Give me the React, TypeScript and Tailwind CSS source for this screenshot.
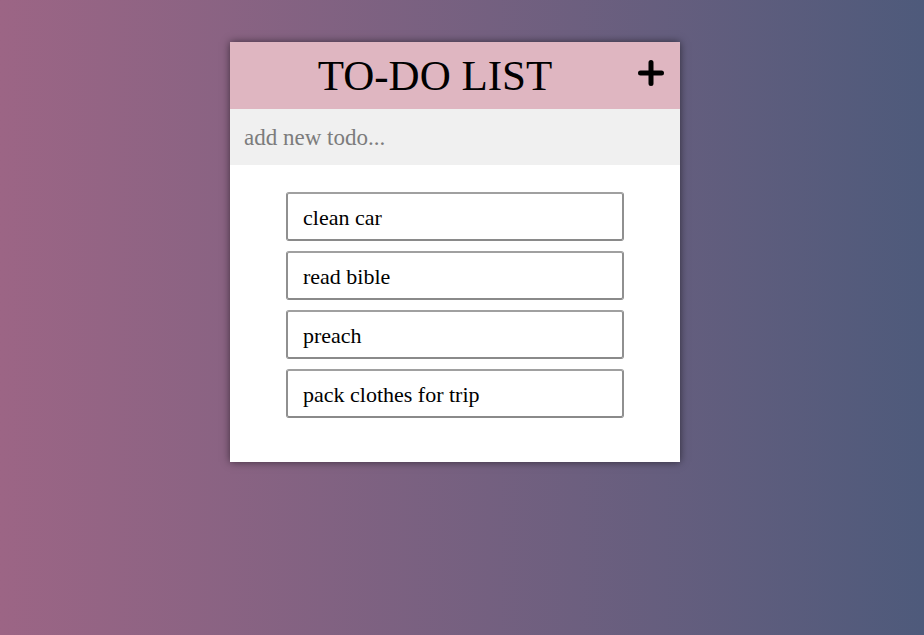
import React from "react";

const items = ["clean car", "read bible", "preach", "pack clothes for trip"];

export default function App() {
  return (
    <div
      className="w-full h-[635px] bg-gradient-to-r from-[#9c6585] to-[#4e5a7b] flex justify-center pt-[42px] pr-[14px]"
      style={{ fontFamily: '"Liberation Serif", serif' }}
    >
      <div className="w-[450px] h-[420px] bg-white shadow-[0_0_8px_rgba(0,0,0,0.55)] flex flex-col">
        <div className="h-[67px] bg-[#dfb6c1] flex items-center relative">
          <h1 className="w-full text-center text-[43px] text-black pr-[40px] leading-none font-normal">
            TO-DO LIST
          </h1>
          <span className="absolute right-[16px] top-[18px] leading-none">
            <svg width="26" height="26" viewBox="0 0 26 26">
              <path d="M13 2.5v21M2.5 13h21" stroke="black" strokeWidth="5" strokeLinecap="round" />
            </svg>
          </span>
        </div>
        <div className="h-[56px] bg-[#f0f0f0] flex items-center pl-[14px] pt-[3px] text-[23px] text-[#7c7c7c]">
          add new todo...
        </div>
        <div className="flex flex-col items-center pt-[27px] gap-[10px]">
          {items.map((t) => (
            <div
              key={t}
              className="w-[338px] h-[49px] border-2 border-t-[#a0a0a0] border-l-[#909090] border-r-[#909090] border-b-[#8a8a8a] rounded-[3px] flex items-center pl-[15px] pt-[1px] text-[22px] text-black"
            >
              {t}
            </div>
          ))}
        </div>
      </div>
    </div>
  );
}
